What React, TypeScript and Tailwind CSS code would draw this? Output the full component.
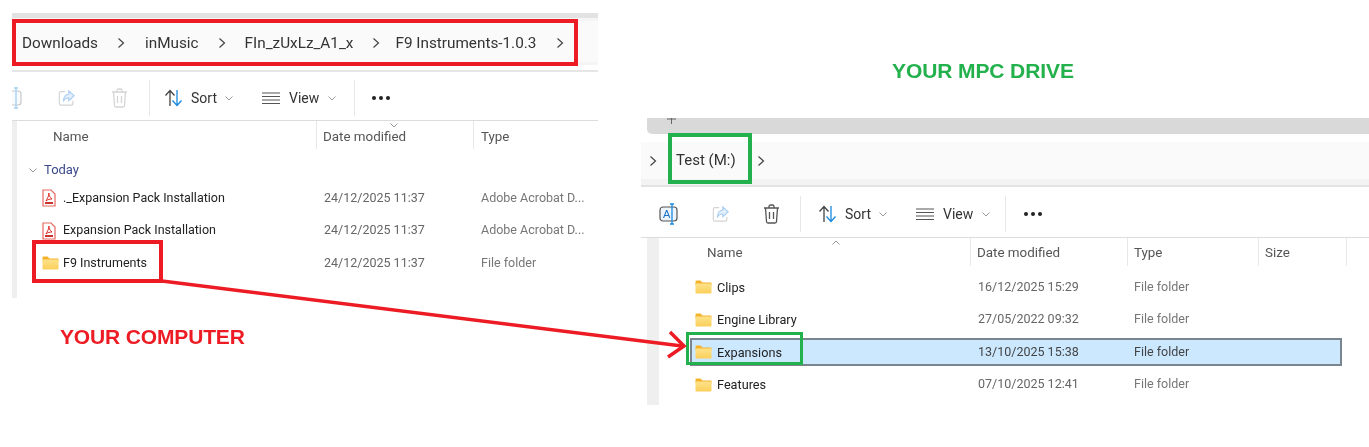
import React from "react";

const Folder = () => (
  <svg width="17" height="14" viewBox="0 0 17 14" className="shrink-0">
    <defs>
      <linearGradient id="fg" x1="0" y1="0" x2="0" y2="1">
        <stop offset="0" stopColor="#fde28a" />
        <stop offset="1" stopColor="#fbcf5a" />
      </linearGradient>
    </defs>
    <path d="M0.5 1.5a1 1 0 0 1 1-1h4l2 2h8a1 1 0 0 1 1 1v2h-16z" fill="#f3b32c" />
    <rect x="0.5" y="3.5" width="16" height="10" rx="1" fill="url(#fg)" />
  </svg>
);

const Pdf = () => (
  <span className="w-[17px] shrink-0 flex">
    <svg width="14" height="18" viewBox="0 0 14 18" className="shrink-0">
      <path d="M1 1h8l4 4v12H1z" fill="#fff" stroke="#e8685f" strokeWidth="1.2" />
      <path d="M7 4c-.8 2 .8 4 3 6-2 0-4.400.4-6 2 1-2 3-5 3-8z" fill="none" stroke="#d9281e" strokeWidth="1" />
      <rect x="3" y="13" width="8" height="2" fill="#c8352c" />
    </svg>
  </span>
);

const Chevron = ({ className = "" }: { className?: string }) => (
  <svg width="8" height="12" viewBox="0 0 8 12" className={"shrink-0 " + className}>
    <path d="M1.500 1.500 6.500 6l-5 4.500" fill="none" stroke="#444" strokeWidth="1.200" />
  </svg>
);

const Caret = () => (
  <svg width="8" height="5" viewBox="0 0 8 5" className="shrink-0">
    <path d="M.5.5 4 4 7.500.5" fill="none" stroke="#999" strokeWidth="1" />
  </svg>
);

const Rename = () => (
  <svg width="20" height="24" viewBox="0 0 20 24" className="shrink-0">
    <rect x="1" y="5" width="17" height="14" rx="3" fill="#eef4fb" stroke="#555" strokeWidth="1.200" />
    <text x="4" y="16" fontSize="11" fontFamily="Liberation Sans" fill="#1a6fc4">A</text>
    <path d="M13 2v20M11 2h4M11 22h4" stroke="#1a8ae0" strokeWidth="1.300" fill="none" />
  </svg>
);

const RenameFaded = () => (
  <svg width="11" height="24" viewBox="9 0 11 24" className="shrink-0 opacity-40">
    <rect x="1" y="5" width="17" height="14" rx="3" fill="#eef4fb" stroke="#777" strokeWidth="1.200" />
    <path d="M13 2v20M11 2h4M11 22h4" stroke="#1a8ae0" strokeWidth="1.300" fill="none" />
  </svg>
);

const Share = () => (
  <svg width="18" height="18" viewBox="0 0 20 20" className="shrink-0">
    <path d="M8 3H3a1.500 1.500 0 0 0-1.500 1.500v12A1.500 1.500 0 0 0 3 18h12a1.500 1.500 0 0 0 1.500-1.500V13" fill="none" stroke="#d4d4d4" strokeWidth="1.300" />
    <path d="M12 2l6 5.500-6 5.500V10c-3 0-5 1-6 4 0-5 2-8 6-8.500z" fill="#e3effa" stroke="#a9cdf0" strokeWidth="1.200" />
  </svg>
);

const Trash = ({ color }: { color: string }) => (
  <svg width="17" height="20" viewBox="0 0 17 20" className="shrink-0">
    <path d="M1 4h15M6 4V2.500A1.500 1.500 0 0 1 7.500 1h2A1.500 1.500 0 0 1 11 2.500V4M2.500 4l1 13.500A1.500 1.500 0 0 0 5 19h7a1.500 1.500 0 0 0 1.500-1.500L14.500 4M6.500 8v7M10.500 8v7" fill="none" stroke={color} strokeWidth="1.300" />
  </svg>
);

const SortIcon = () => (
  <svg width="19" height="18" viewBox="0 0 19 18" className="shrink-0">
    <path d="M6 17V2M1.500 6.500 6 1.500l4.500 5" fill="none" stroke="#444" strokeWidth="1.300" />
    <path d="M13 1v15M8.500 11.500 13 16.500l4.500-5" fill="none" stroke="#1a8ae0" strokeWidth="1.300" />
  </svg>
);

const ViewIcon = () => (
  <svg width="18" height="13" viewBox="0 0 18 13" className="shrink-0">
    <path d="M0 1h18M0 4.500h18M0 8h18M0 11.500h18" stroke="#555" strokeWidth="1.100" fill="none" />
  </svg>
);

const Dots = () => (
  <span className="flex gap-[3px] shrink-0">
    <span className="w-[4px] h-[4px] rounded-full bg-[#222]" />
    <span className="w-[4px] h-[4px] rounded-full bg-[#222]" />
    <span className="w-[4px] h-[4px] rounded-full bg-[#222]" />
  </span>
);

const LeftToolbar = () => (
  <div className="flex items-center h-[48px] pt-[4px] text-[14px] text-[#333]">
    <div className="flex items-center gap-[35px]">
      <RenameFaded />
      <Share />
      <Trash color="#d5d5d5" />
    </div>
    <div className="w-px h-[36px] bg-[#e8e8e8] ml-[21px]" />
    <div className="flex items-center gap-[8px] ml-[14px]">
      <SortIcon />
      <span>Sort</span>
      <Caret />
    </div>
    <div className="flex items-center gap-[9px] ml-[29px]">
      <ViewIcon />
      <span>View</span>
      <Caret />
    </div>
    <div className="w-px h-[36px] bg-[#e8e8e8] ml-[18px]" />
    <div className="ml-[17px]"><Dots /></div>
  </div>
);

const RightToolbar = () => (
  <div className="flex items-center h-[50px] pt-[4px] pl-[18px] text-[14px] text-[#333]">
    <div className="flex items-center gap-[33px]">
      <Rename />
      <Share />
      <Trash color="#555" />
    </div>
    <div className="w-px h-[36px] bg-[#e8e8e8] ml-[20px]" />
    <div className="flex items-center gap-[8px] ml-[17px]">
      <SortIcon />
      <span>Sort</span>
      <Caret />
    </div>
    <div className="flex items-center gap-[9px] ml-[29px]">
      <ViewIcon />
      <span>View</span>
      <Caret />
    </div>
    <div className="w-px h-[36px] bg-[#e8e8e8] ml-[15px]" />
    <div className="ml-[18px]"><Dots /></div>
  </div>
);

type RowProps = { icon: React.ReactNode; name: string; date: string; type: string; selected?: boolean };

const LeftRow = ({ icon, name, date, type }: RowProps) => (
  <div className="flex items-center h-[32.500px] text-[12.500px]">
    <div className="w-[307px] pl-[25px] flex items-center gap-[4px] text-[#222]">{icon}<span>{name}</span></div>
    <div className="w-[157px] text-[#666]">{date}</div>
    <div className="text-[#777]">{type}</div>
  </div>
);

const RightRow = ({ icon, name, date, type, selected }: RowProps) => (
  <div className={"flex items-center text-[12.500px] " + (selected ? "h-[28px] my-[2.250px] bg-[#cce8ff] border-2 border-[#7b8590]" : "h-[32.500px]")}>
    <div className={"flex items-center gap-[5px] text-[#222] text-[12.700px] " + (selected ? "w-[286px] pl-[3px]" : "w-[288px] pl-[5px]")}>{icon}<span>{name}</span></div>
    <div className={"w-[156px] " + (selected ? "text-[#444]" : "text-[#666]")}>{date}</div>
    <div className={selected ? "text-[#444]" : "text-[#777]"}>{type}</div>
  </div>
);

const HeaderCell = ({ label, className }: { label: string; className: string }) => (
  <div className={"h-[28px] flex items-center border-r border-[#e8e8e8] text-[#555] " + className}>{label}</div>
);

export default function App() {
  return (
    <div className="relative w-[1369px] h-[447px] bg-white overflow-hidden flex items-start blur-[0.35px] font-['Roboto','Open_Sans',sans-serif]">
      {/* Left window */}
      <div className="w-[586px] ml-[12px] mt-[13px] shrink-0">
        <div className="h-[5px] bg-[#e2e2e2]" />
        <div className="h-[47px] bg-[#fafafa] flex items-center pl-[10px] pt-[3px] text-[15.300px] text-[#333] border-y-[3px] border-[#f5f5f5]">
          <span>Downloads</span>
          <Chevron className="ml-[19px]" />
          <span className="ml-[20px]">inMusic</span>
          <Chevron className="ml-[19px]" />
          <span className="ml-[19px]">FIn_zUxLz_A1_x</span>
          <Chevron className="ml-[19px]" />
          <span className="ml-[15px]">F9 Instruments-1.0.3</span>
          <Chevron className="ml-[20px]" />
        </div>
        <div className="h-[7px] border-b-2 border-[#e6e6e6]" />
        <div className="h-[49px] border-b border-[#dcdcdc]"><LeftToolbar /></div>
        <div className="flex">
          <div className="w-[5px] h-[177px] bg-[#efefef]" />
          <div className="flex-1">
            <div className="relative flex text-[13.400px]">
              <HeaderCell label="Name" className="w-[300px] pl-[36px] pt-[4px]" />
              <HeaderCell label="Date modified" className="w-[157px] pl-[6px] pt-[4px]" />
              <div className="h-[28px] flex items-center pl-[7px] pt-[4px] text-[#555]">Type</div>
              <svg width="8" height="5" viewBox="0 0 8 5" className="absolute left-[373px] top-[2px]">
                <path d="M.5.5 4 4 7.500.5" fill="none" stroke="#999" strokeWidth="1" />
              </svg>
            </div>
            <div className="h-[42px] flex items-center pl-[12px] gap-[7px] text-[13px] text-[#3b4a8c]">
              <Caret />
              <span>Today</span>
            </div>
            <div className="-mt-[9px]">
              <LeftRow icon={<Pdf />} name="._Expansion Pack Installation" date="24/12/2025 11:37" type="Adobe Acrobat D..." />
              <LeftRow icon={<Pdf />} name="Expansion Pack Installation" date="24/12/2025 11:37" type="Adobe Acrobat D..." />
              <LeftRow icon={<Folder />} name="F9 Instruments" date="24/12/2025 11:37" type="File folder" />
            </div>
          </div>
        </div>
      </div>

      {/* Right window */}
      <div className="flex-1 ml-[43px] mt-[118px]">
        <div className="ml-[6px] h-[16px] bg-[#d9d9d9] rounded-bl-[5px] flex items-start pl-[20px]">
          <svg width="9" height="6" viewBox="0 0 9 6" className="shrink-0">
            <path d="M4.500 0v6M0 1h9" stroke="#666" strokeWidth="1" fill="none" />
          </svg>
        </div>
        <div className="h-[8px]" />
        <div className="h-[37px] bg-[#fafafa] flex items-center pl-[8px] text-[15px] text-[#333]">
          <Chevron />
          <span className="ml-[19px]">Test (M:)</span>
          <Chevron className="ml-[21px]" />
        </div>
        <div className="h-[8px] bg-[#f3f3f3] border-b-2 border-[#e3e3e3]" />
        <div className="h-[51px] border-b border-[#dcdcdc]"><RightToolbar /></div>
        <div className="flex">
          <div className="ml-[6px] w-[12px] h-[167px] bg-[#efefef]" />
          <div className="flex-1">
            <div className="relative flex text-[13.400px]">
              <HeaderCell label="Name" className="w-[312px] pl-[48px] pt-[2px]" />
              <HeaderCell label="Date modified" className="w-[157px] pl-[6px] pt-[2px]" />
              <HeaderCell label="Type" className="w-[131px] pl-[6px] pt-[2px]" />
              <div className="h-[28px] w-[88px] flex items-center border-r border-[#e8e8e8] pl-[6px] pt-[2px] text-[#555]">Size</div>
              <svg width="8" height="5" viewBox="0 0 8 5" className="absolute left-[173px] top-[2px]">
                <path d="M.5 4.500 4 1l3.500 3.500" fill="none" stroke="#999" strokeWidth="1" />
              </svg>
            </div>
            <div className="pl-[31px] w-[683px] mt-[5px]">
              <RightRow icon={<Folder />} name="Clips" date="16/12/2025 15:29" type="File folder" />
              <RightRow icon={<Folder />} name="Engine Library" date="27/05/2022 09:32" type="File folder" />
              <RightRow icon={<Folder />} name="Expansions" date="13/10/2025 15:38" type="File folder" selected />
              <RightRow icon={<Folder />} name="Features" date="07/10/2025 12:41" type="File folder" />
            </div>
          </div>
        </div>
      </div>

      {/* Annotations */}
      <div className="absolute left-[12px] top-[19px] w-[566px] h-[47px] border-[4px] border-[#ed1c24]" />
      <div className="absolute left-[32px] top-[240px] w-[131px] h-[43px] border-[4px] border-[#ed1c24]" />
      <div className="absolute left-[668px] top-[133px] w-[84px] h-[51px] border-[4px] border-[#22b14c]" />
      <div className="absolute left-[686px] top-[332px] w-[117px] h-[33px] border-[3px] border-[#22b14c]" />
      <div className="absolute left-[60px] top-[321px] text-[21px] font-bold tracking-[-0.15px] text-[#ed1c24] font-['Liberation_Sans',sans-serif]">YOUR COMPUTER</div>
      <div className="absolute left-[892px] top-[55px] text-[21px] font-bold tracking-[-0.1px] text-[#22b14c] font-['Liberation_Sans',sans-serif]">YOUR MPC DRIVE</div>
      <svg className="absolute left-0 top-0 pointer-events-none" width="1369" height="447" viewBox="0 0 1369 447">
        <path d="M162 281 682 346" stroke="#ed1c24" strokeWidth="3.500" fill="none" />
        <path d="M670 332 684 346 668 357" stroke="#ed1c24" strokeWidth="3.500" fill="none" />
      </svg>
    </div>
  );
}
